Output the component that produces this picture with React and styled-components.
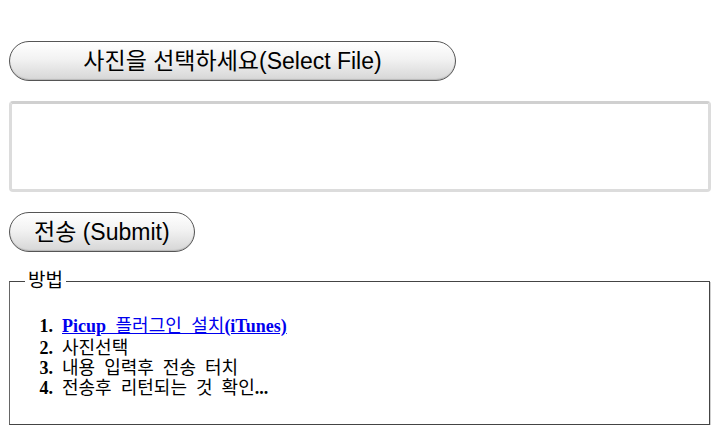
import styled, { createGlobalStyle } from "styled-components";

const GlobalStyle = createGlobalStyle`
  html, body {
    margin: 0;
    padding: 0;
    background: #fff;
  }
  body {
    font-family: "Liberation Sans", "Noto Sans CJK KR", sans-serif;
    color: #000;
  }
`;

const Page = styled.div`
  padding: 41px 9px 0 9px;
  display: flex;
  flex-direction: column;
  align-items: flex-start;
`;

const PillButton = styled.button`
  box-sizing: border-box;
  height: 40px;
  width: ${(p) => p.$width || "auto"};
  padding: 0 24px;
  border: 1px solid #555;
  border-radius: 20px;
  background: linear-gradient(to bottom, #ffffff 0%, #f2f2f2 45%, #d6d6d6 100%);
  box-shadow: inset 0 -1px 1px rgba(0, 0, 0, 0.15);
  font-family: "Liberation Sans", "Noto Sans CJK KR", sans-serif;
  font-size: 23px;
  line-height: 38px;
  color: #000;
  text-align: center;
  white-space: nowrap;
  margin-bottom: ${(p) => p.$gap || "20px"};
`;

const Message = styled.textarea`
  box-sizing: border-box;
  width: 702px;
  height: 91px;
  border: 3px solid #dcdcdc;
  border-top-color: #d0d0d0;
  border-radius: 4px;
  resize: none;
  margin: 0 0 20px 0;
  padding: 4px;
  font-family: "Liberation Sans", "Noto Sans CJK KR", sans-serif;
  font-size: 16px;
  outline: none;
`;

const HowTo = styled.fieldset`
  box-sizing: border-box;
  width: 701px;
  margin: 19px 0 0 0;
  padding: 2px 12px 12px 12px;
  border: 1px solid #444;
  border-left-color: #666;
  box-shadow: 1px 1px 0 #cfcfcf;
`;

const Legend = styled.legend`
  padding: 0 3px;
  margin-left: 3px;
  font-family: "Liberation Sans", "Noto Sans CJK KR", sans-serif;
  font-size: 19px;
  line-height: 20px;
`;

const Steps = styled.ol`
  margin: 23px 0 16px 0;
  padding-left: 40px;
  font-family: "Liberation Serif", "Noto Sans CJK KR", serif;
  font-size: 18px;
  line-height: 20px;
  word-spacing: 5px;
`;

const Step = styled.li`
  height: 20px;
  &::marker {
    content: counter(list-item) ".\\00a0\\00a0";
    font-weight: bold;
    font-family: "Liberation Serif", serif;
    word-spacing: 0;
  }
`;

const StepText = styled.span`
  font-family: "Noto Sans CJK KR", sans-serif;
`;

const StepLink = styled.a`
  color: #0000ee;
  text-decoration: underline;
  font-family: "Liberation Serif", "Noto Sans CJK KR", serif;
`;

const Bold = styled.b`
  font-family: "Liberation Serif", serif;
`;

export default function App() {
  return (
    <>
      <GlobalStyle />
      <Page>
        <PillButton $width="447px">사진을 선택하세요(Select File)</PillButton>
        <Message />
        <PillButton $gap="0">전송 (Submit)</PillButton>
        <HowTo>
          <Legend>방법</Legend>
          <Steps>
            <Step>
              <StepLink href="#">
                <Bold>Picup</Bold> 플러그인 설치<Bold>(iTunes) </Bold>
              </StepLink>
            </Step>
            <Step>
              <StepText>사진선택</StepText>
            </Step>
            <Step>
              <StepText>내용 입력후 전송 터치</StepText>
            </Step>
            <Step>
              <StepText>
                전송후 리턴되는 것 확인<Bold>...</Bold>
              </StepText>
            </Step>
          </Steps>
        </HowTo>
      </Page>
    </>
  );
}
